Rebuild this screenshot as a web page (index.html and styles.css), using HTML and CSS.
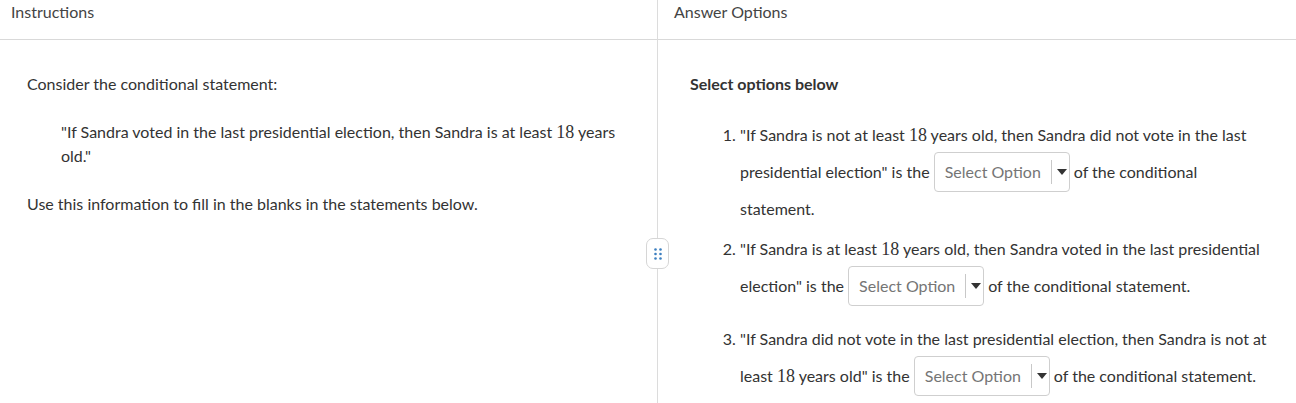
FILE: index.html
```
<!DOCTYPE html>
<html>
<head>
<meta charset="utf-8">
<link rel="stylesheet" href="styles.css">
</head>
<body>
<div class="layout">
  <section class="pane pane-left">
    <div class="pane-head">Instructions</div>
    <div class="pane-body left-body">
      <p class="para">Consider the conditional statement:</p>
      <p class="quote">"If Sandra voted in the last presidential election, then Sandra is at least <span class="num">18</span> years old."</p>
      <p class="para">Use this information to fill in the blanks in the statements below.</p>
    </div>
  </section>
  <section class="pane pane-right">
    <div class="pane-head">Answer Options</div>
    <div class="pane-body right-body">
      <p class="lead">Select options below</p>
      <ol class="items">
        <li>"If Sandra is not at least <span class="num">18</span> years old, then Sandra did not vote in the last presidential election" is the <span class="select"><span class="select-text">Select Option</span><span class="select-sep"></span><span class="caret"></span></span> of the conditional statement.</li>
        <li>"If Sandra is at least <span class="num">18</span> years old, then Sandra voted in the last presidential election" is the <span class="select"><span class="select-text">Select Option</span><span class="select-sep"></span><span class="caret"></span></span> of the conditional statement.</li>
        <li>"If Sandra did not vote in the last presidential election, then Sandra is not at least <span class="num">18</span> years old" is the <span class="select"><span class="select-text">Select Option</span><span class="select-sep"></span><span class="caret"></span></span> of the conditional statement.</li>
      </ol>
    </div>
  </section>
  <div class="handle">
    <svg width="8" height="12" viewBox="0 0 8 12">
      <circle cx="1.5" cy="1.5" r="1.3" fill="#3c7fc0"/>
      <circle cx="6.5" cy="1.5" r="1.3" fill="#3c7fc0"/>
      <circle cx="1.5" cy="6" r="1.3" fill="#3c7fc0"/>
      <circle cx="6.5" cy="6" r="1.3" fill="#3c7fc0"/>
      <circle cx="1.5" cy="10.5" r="1.3" fill="#3c7fc0"/>
      <circle cx="6.5" cy="10.5" r="1.3" fill="#3c7fc0"/>
    </svg>
  </div>
</div>
</body>
</html>
```
FILE: styles.css
```
* { box-sizing: border-box; }
html, body { margin: 0; padding: 0; background: #fff; }
body {
  font-family: Lato, "Open Sans", sans-serif;
  font-size: 16px;
  line-height: 24px;
  color: #333;
}
.layout {
  position: relative;
  display: grid;
  grid-template-columns: 658px 1fr;
  height: 403px;
  overflow: hidden;
}
.pane { min-height: 403px; }
.pane-left { border-right: 1px solid #dcdcdc; }
.pane-head {
  height: 40px;
  border-bottom: 1px solid #d9d9d9;
  color: #444;
  line-height: 24px;
}
.pane-left .pane-head { padding-left: 11px; }
.pane-right .pane-head { padding-left: 16px; }
.left-body { padding: 32px 24px 0 27px; }
.para { margin: 0 0 24px 0; }
.quote { margin: 0 0 24px 34px; }
.num {
  font-family: "Liberation Serif", "DejaVu Serif", serif;
  font-size: 18px;
}
.right-body { padding: 32px 25px 0 32px; }
.lead { margin: 0; font-weight: 700; }
.items {
  margin: 27px 0 0 0;
  padding-left: 50px;
}
.items li { margin-bottom: 16px; padding-left: 0; }
.select {
  display: inline-flex;
  align-items: center;
  height: 40px;
  width: 136px;
  margin: 5px 0;
  vertical-align: baseline;
  border: 1px solid #cfcfcf;
  border-radius: 4px;
  padding-left: 10px;
  color: #757575;
}
.select-text { width: 106px; white-space: nowrap; }
.select-sep {
  width: 1px;
  height: 24px;
  background: #c8c8c8;
  margin-right: 5px;
}
.caret {
  width: 0;
  height: 0;
  border-left: 5px solid transparent;
  border-right: 5px solid transparent;
  border-top: 6px solid #333;
}
.handle {
  position: absolute;
  left: 646px;
  top: 238px;
  width: 23px;
  height: 31px;
  border: 1px solid #d6d6d6;
  border-radius: 7px;
  background: #fff;
  display: flex;
  align-items: center;
  justify-content: center;
}
```
